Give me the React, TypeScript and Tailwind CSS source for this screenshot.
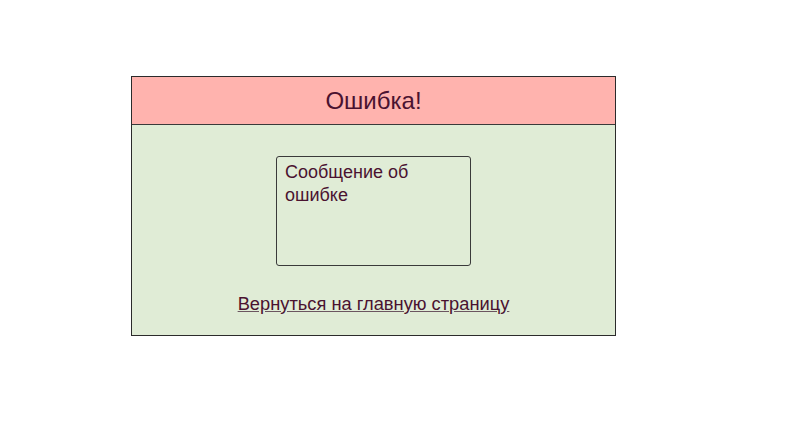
export default function App() {
  return (
    <div className="w-[787px] h-[439px] bg-white" style={{ fontFamily: '"Liberation Sans", Arial, sans-serif' }}>
      <div className="pt-[76px] pl-[131px]">
        <div className="w-[485px] h-[260px] border border-[#2b2b2b] flex flex-col">
          <div className="h-[48px] bg-[#ffb3ae] border-b border-[#3a3a3a] flex items-center justify-center">
            <span className="text-[24px] text-[#4a1230] leading-none">Ошибка!</span>
          </div>
          <div className="flex-1 bg-[#e0ecd6] flex flex-col items-center pt-[31px]">
            <div className="w-[195px] h-[110px] border border-[#3a3a3a] rounded-[3px] px-[8px] pt-[4px] text-[18px] leading-[23px] text-[#4a1230]">
              Сообщение об ошибке
            </div>
            <a href="#" className="mt-[26px] text-[18.3px] leading-[23px] text-[#4a1230] underline decoration-[#6b5560]">
              Вернуться на главную страницу
            </a>
          </div>
        </div>
      </div>
    </div>
  );
}
